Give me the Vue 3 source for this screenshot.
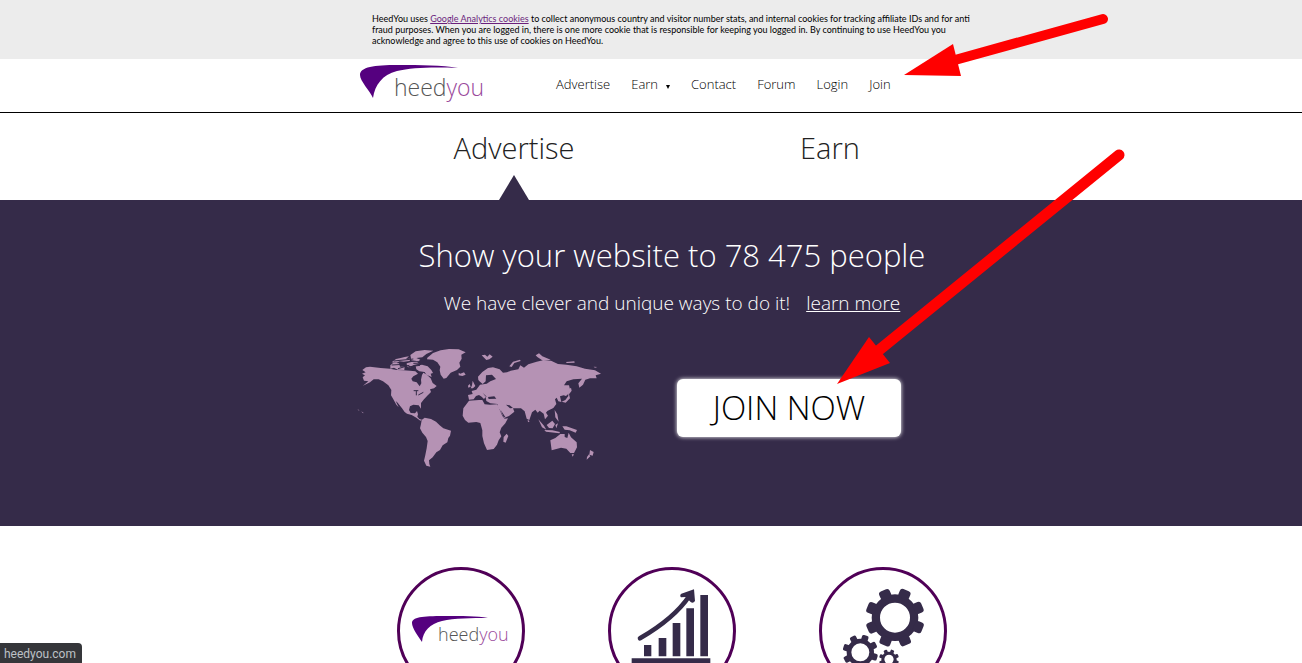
<template>
  <div class="page">
    <div class="cookie-bar">
      <div class="container cookie-inner">
        <p class="cookie-text">
          HeedYou uses <a href="#cookies">Google Analytics cookies</a> to collect anonymous country and visitor number stats, and internal cookies for tracking affiliate IDs and for anti
          <br />fraud purposes. When you are logged in, there is one more cookie that is responsible for keeping you logged in. By continuing to use HeedYou you
          <br />acknowledge and agree to this use of cookies on HeedYou.
        </p>
      </div>
    </div>

    <header class="header">
      <div class="container header-inner">
        <a href="#home" class="logo" aria-label="heedyou">
          <svg viewBox="0 0 132 42" width="132" height="42">
            <path class="swoosh" d="M4 12C4 4 18 2 42 2C64 2 86 2 102 5C82 4 56 4 41 8C26 12 19 22 17 35C14 28 4 18 4 12Z" />
            <text class="logo-text" x="38" y="33"><tspan>heed</tspan><tspan class="logo-you">you</tspan></text>
          </svg>
        </a>
        <nav class="nav">
          <a v-for="item in navItems" :key="item.label" :href="item.href">
            {{ item.label }}<span v-if="item.menu" class="caret"></span>
          </a>
        </nav>
      </div>
    </header>

    <div class="container tabs">
      <button
        v-for="tab in tabs"
        :key="tab"
        type="button"
        class="tab"
        :class="{ active: tab === activeTab }"
        @click="activeTab = tab"
      >
        {{ tab }}
      </button>
    </div>

    <section class="hero">
      <div class="container">
        <h1 class="hero-title">Show your website to 78 475 people</h1>
        <p class="hero-sub">
          <span>We have clever and unique ways to do it!</span>
          <a href="#learn">learn more</a>
        </p>
        <div class="hero-row">
          <svg class="map" viewBox="18 39 738 357" width="246" height="119">
            <!-- North America -->
            <path d="M37 105L48 97L60 95L92 99L120 101L140 105L160 106L180 107L196 109L204 116L190 124L184 131L188 139L200 142L209 154L214 145L213 134L216 120L220 113L231 119L237 125L242 130L248 144L260 153L252 160L240 163L243 171L234 180L222 193L213 204L213 221L206 211L190 209L180 214L177 225L182 234L195 235L201 228L204 238L202 245L208 252L216 254L211 257L199 248L185 240L171 236L164 231L156 220L143 203L137 198L146 217L139 209L130 193L123 181L124 165L115 151L99 139L86 133L71 133L60 142L39 152L55 139L42 137L38 127L45 121L36 116L47 112Z" />
            <!-- Arctic islands -->
            <path d="M121 91L130 83L147 85L150 95L164 95L163 105L143 104L132 98L121 101ZM125 82L138 72L152 69L164 66L177 64L168 72L181 71L179 78L161 80L149 79L140 83ZM181 60L197 49L224 45L250 47L229 57L217 67L199 69L211 74L205 79L184 76ZM170 85L184 81L201 80L207 86L191 90L180 98L171 95ZM197 93L216 89L233 94L244 105L249 114L242 116L245 126L229 119L224 111L208 109L199 103Z" />
            <path class="lakes" d="M125 90L160 88L180 95L210 91M131 78L190 72M144 101L178 91M167 103L190 93M190 85L230 84M191 167L205 167M199 167L199 181M205 180L220 172" />
            <!-- Greenland, Iceland, Svalbard -->
            <path d="M232 68L249 54L272 46L297 42L326 43L347 52L334 59L335 71L328 83L331 95L321 105L302 113L289 129L281 131L272 119L269 106L271 95L262 82L249 74L231 73ZM326 113L331 116L342 112L347 119L337 123L326 121ZM395 61L405 59L412 65L419 58L428 65L418 73L409 75Z" />
            <!-- South America -->
            <path d="M215 255L224 248L243 252L258 260L269 271L280 280L303 287L300 302L295 309L292 322L278 331L270 345L259 352L248 367L237 376L238 387L241 395L229 392L222 377L226 360L230 340L233 318L228 306L217 293L210 280L213 267Z" />
            <!-- Africa and Madagascar -->
            <path d="M357 197L387 195L397 195L404 208L420 209L442 208L448 222L457 243L464 251L474 250L466 265L454 278L449 292L454 304L446 316L441 329L431 342L411 345L402 325L397 303L397 286L391 264L379 261L355 263L345 255L338 242L340 220ZM470 296L475 303L467 323L460 320L461 306Z" />
            <!-- Europe and Asia -->
            <path d="M357 194L354 180L368 177L365 168L379 164L390 149L410 146L421 139L438 132L426 119L408 121L407 139L398 147L390 140L385 135L384 125L397 111L414 99L429 97L449 103L459 113L471 112L482 107L505 103L511 91L522 98L535 88L560 80L579 76L603 77L624 87L649 89L680 94L705 101L735 106L753 116L737 121L740 130L720 130L706 134L699 149L688 158L685 145L696 131L670 133L650 139L642 151L657 151L662 170L648 183L641 181L630 184L634 201L625 199L620 188L615 193L619 207L610 219L592 228L588 233L594 242L585 253L581 236L569 227L563 233L556 224L546 232L538 255L530 251L524 229L513 220L489 220L493 230L477 243L462 249L450 226L443 216L443 207L421 205L409 198L407 186L402 192L395 185L387 180L378 183L371 193Z" />
            <path d="M368 137L376 153L369 160L362 160L366 151ZM359 147L362 155L355 158L354 152ZM478 94L489 80L510 74L512 78L493 84L485 96ZM557 61L567 55L577 64L602 74L580 78L562 66ZM648 81L673 79L674 83L650 84ZM731 95L742 96L735 98Z" />
            <path d="M654 165L663 158L665 167L657 178L660 190L647 203L635 200L646 195L655 183ZM533 254L539 259L534 262ZM614 225L622 238L626 260L616 247ZM565 253L582 272L589 284L576 277ZM590 270L607 257L615 267L608 280L597 279ZM583 285L607 286L630 291L628 295L588 290ZM616 270L624 265L619 280ZM637 274L649 274L681 285L677 293L659 286L644 284Z" />
            <!-- Australia and New Zealand -->
            <path d="M601 316L616 309L631 297L644 297L644 306L652 309L656 293L663 307L680 322L681 337L672 354L661 354L649 341L633 338L605 346ZM665 358L672 358L668 365ZM720 345L731 351L728 362L718 359ZM717 358L721 364L710 374L711 366Z" />
            <path d="M22 222L28 226L27 227ZM34 229L42 235L37 233Z" />
            <!-- Black sea, Caspian, Gulf -->
            <path class="water" d="M414 186L433 184L439 191L416 192ZM468 209L479 211L489 219L480 220ZM452 225L466 246L461 247ZM398 173L411 186L406 184Z" />
          </svg>
          <button type="button" class="join-button">JOIN NOW</button>
        </div>
      </div>
    </section>

    <div class="container features">
      <div class="circle">
        <svg viewBox="380 570 122 122" width="122" height="122">
          <path class="swoosh" transform="translate(388 614)" d="M4 9C4 3 14 2 36 2C54 2 69 2 80 4C64 4 46 4 34 7C22 10 15 17 14 28C10 22 4 14 4 9Z" />
          <text class="logo-text small" x="418" y="641"><tspan>heed</tspan><tspan class="logo-you">you</tspan></text>
        </svg>
      </div>
      <div class="circle">
        <svg class="dark" viewBox="63 45 366 366" width="122" height="122">
          <path d="M162 270h22v34h-22zM206 249h23v55h-23zM248 204h23v100h-23zM289 160h23v144h-23zM331 120h23v184h-23zM125 310h236v16h-236z" />
          <path class="trend" d="M150 250Q253 190 298 123" />
          <path d="M274 116Q268 121 273 127L287 126L302 141Q309 147 315 138L312 103Z" />
        </svg>
      </div>
      <div class="circle">
        <svg class="dark" viewBox="66 45 366 366" width="122" height="122">
          <g v-for="gear in gears" :key="gear.r" :transform="`translate(${gear.x} ${gear.y})`">
            <circle :r="(gear.r + gear.hole) / 2" :stroke-width="gear.r - gear.hole" class="ring" />
            <rect
              v-for="n in 8"
              :key="n"
              :x="-gear.tooth / 2"
              :y="-gear.outer"
              :width="gear.tooth"
              :height="gear.outer - gear.r + 8"
              :rx="gear.tooth / 4"
              :transform="`rotate(${gear.turn + n * 45})`"
            />
          </g>
        </svg>
      </div>
    </div>

    <svg class="arrows" width="1302" height="663" viewBox="0 0 1302 663" aria-hidden="true">
      <path class="shaft" d="M1103 19L955 60" />
      <path d="M904 75L953 44L961 76Z" />
      <path class="shaft thick" d="M1119 155L878 351" />
      <path d="M837 384L869 337L890 363Z" />
    </svg>

    <div class="status">heedyou.com</div>
  </div>
</template>

<script setup>
import { ref } from 'vue'

const navItems = [
  { label: 'Advertise', href: '#advertise' },
  { label: 'Earn', href: '#earn', menu: true },
  { label: 'Contact', href: '#contact' },
  { label: 'Forum', href: '#forum' },
  { label: 'Login', href: '#login' },
  { label: 'Join', href: '#join' },
]

const tabs = ['Advertise', 'Earn']
const activeTab = ref('Advertise')

const gears = [
  { x: 285, y: 188, r: 70, hole: 45, outer: 89, tooth: 34, turn: 22 },
  { x: 181, y: 292, r: 41, hole: 27, outer: 53, tooth: 20, turn: 18 },
  { x: 267, y: 313, r: 23, hole: 14, outer: 30, tooth: 11, turn: 22 },
]
</script>

<style>
body {
  margin: 0;
  background: #fff;
}
</style>

<style scoped>
.page {
  position: relative;
  height: 100vh;
  overflow: hidden;
  font-family: 'Open Sans', 'Noto Sans', sans-serif;
  font-weight: 300;
  color: #000;
}

.container {
  position: relative;
  left: 21px;
  max-width: 632px;
  margin: 0 auto;
}

.cookie-bar {
  background: #ececec;
}

.cookie-inner {
  padding: 13px 0;
}

.cookie-text {
  margin: 0 16px;
  font-family: Lato, 'Open Sans', sans-serif;
  font-size: 9px;
  line-height: 11px;
  font-weight: 400;
  white-space: nowrap;
}

.cookie-text a {
  color: #6b1f7c;
}

.header {
  border-bottom: 1px solid #000;
}

.header-inner {
  box-sizing: border-box;
  display: flex;
  align-items: center;
  height: 53px;
  padding-bottom: 4px;
}

.logo {
  display: block;
  height: 42px;
}

.swoosh {
  fill: #55007f;
}

.logo-text {
  font-size: 23px;
  fill: #555;
}

.logo-text.small {
  font-size: 18px;
}

.logo-you {
  fill: #9a4a9c;
}

.nav {
  display: flex;
  gap: 21px;
  margin-left: 68px;
  font-size: 13px;
  line-height: 20px;
}

.nav a {
  color: #000;
  text-decoration: none;
}

.caret {
  display: inline-block;
  margin-left: 8px;
  border: 2px solid transparent;
  border-top: 4px solid #000;
  border-bottom: 0;
}

.tabs {
  display: grid;
  grid-template-columns: 1fr 1fr;
  height: 87px;
}

.tab {
  position: relative;
  padding: 0 0 18px;
  border: 0;
  background: none;
  font: inherit;
  font-size: 29px;
  color: #222;
  cursor: pointer;
}

.tab.active::after {
  content: '';
  position: absolute;
  bottom: 0;
  left: 50%;
  margin-left: -15px;
  border: 15px solid transparent;
  border-top: 0;
  border-bottom: 25px solid #352b49;
}

.hero {
  box-sizing: border-box;
  height: 326px;
  padding-top: 32px;
  background: #352b49;
  color: #fff;
}

.hero-title {
  margin: 0;
  font-size: 31px;
  line-height: 46px;
  font-weight: 300;
  text-align: center;
  white-space: nowrap;
}

.hero-sub {
  display: flex;
  justify-content: center;
  gap: 16px;
  margin: 11px 0 0;
  font-size: 19px;
  line-height: 28px;
  white-space: nowrap;
}

.hero-sub a {
  color: #fff;
}

.hero-row {
  display: flex;
  align-items: center;
  gap: 75px;
  margin-top: 31px;
}

.map {
  fill: #b592b4;
}

.water {
  fill: #352b49;
}

.lakes {
  fill: none;
  stroke: #352b49;
  stroke-width: 3;
}

.join-button {
  width: 224px;
  height: 58px;
  padding: 0;
  border: 0;
  border-radius: 6px;
  background: #fff;
  box-shadow: 0 0 4px #fff;
  font: inherit;
  font-size: 33px;
  color: #000;
  cursor: pointer;
}

.features {
  display: grid;
  grid-template-columns: repeat(3, 1fr);
  justify-items: center;
  padding-top: 41px;
}

.circle {
  width: 122px;
  height: 122px;
  border: 3px solid #500057;
  border-radius: 50%;
}

.circle svg {
  display: block;
}

.dark {
  fill: #352b49;
}

.trend {
  fill: none;
  stroke: #352b49;
  stroke-width: 14;
  stroke-linecap: round;
}

.ring {
  fill: none;
  stroke: #352b49;
}

.arrows {
  position: absolute;
  top: 0;
  left: 0;
  fill: #f00;
  pointer-events: none;
}

.shaft {
  stroke: #f00;
  stroke-width: 10;
  stroke-linecap: round;
}

.shaft.thick {
  stroke-width: 11;
}

.status {
  position: fixed;
  bottom: 0;
  left: 0;
  padding: 2px 6px 0 4px;
  border-radius: 0 4px 0 0;
  background: #35363a;
  color: #bdc1c6;
  font-family: Roboto, 'Open Sans', sans-serif;
  font-size: 12px;
  line-height: 18px;
  font-weight: 400;
}
</style>
